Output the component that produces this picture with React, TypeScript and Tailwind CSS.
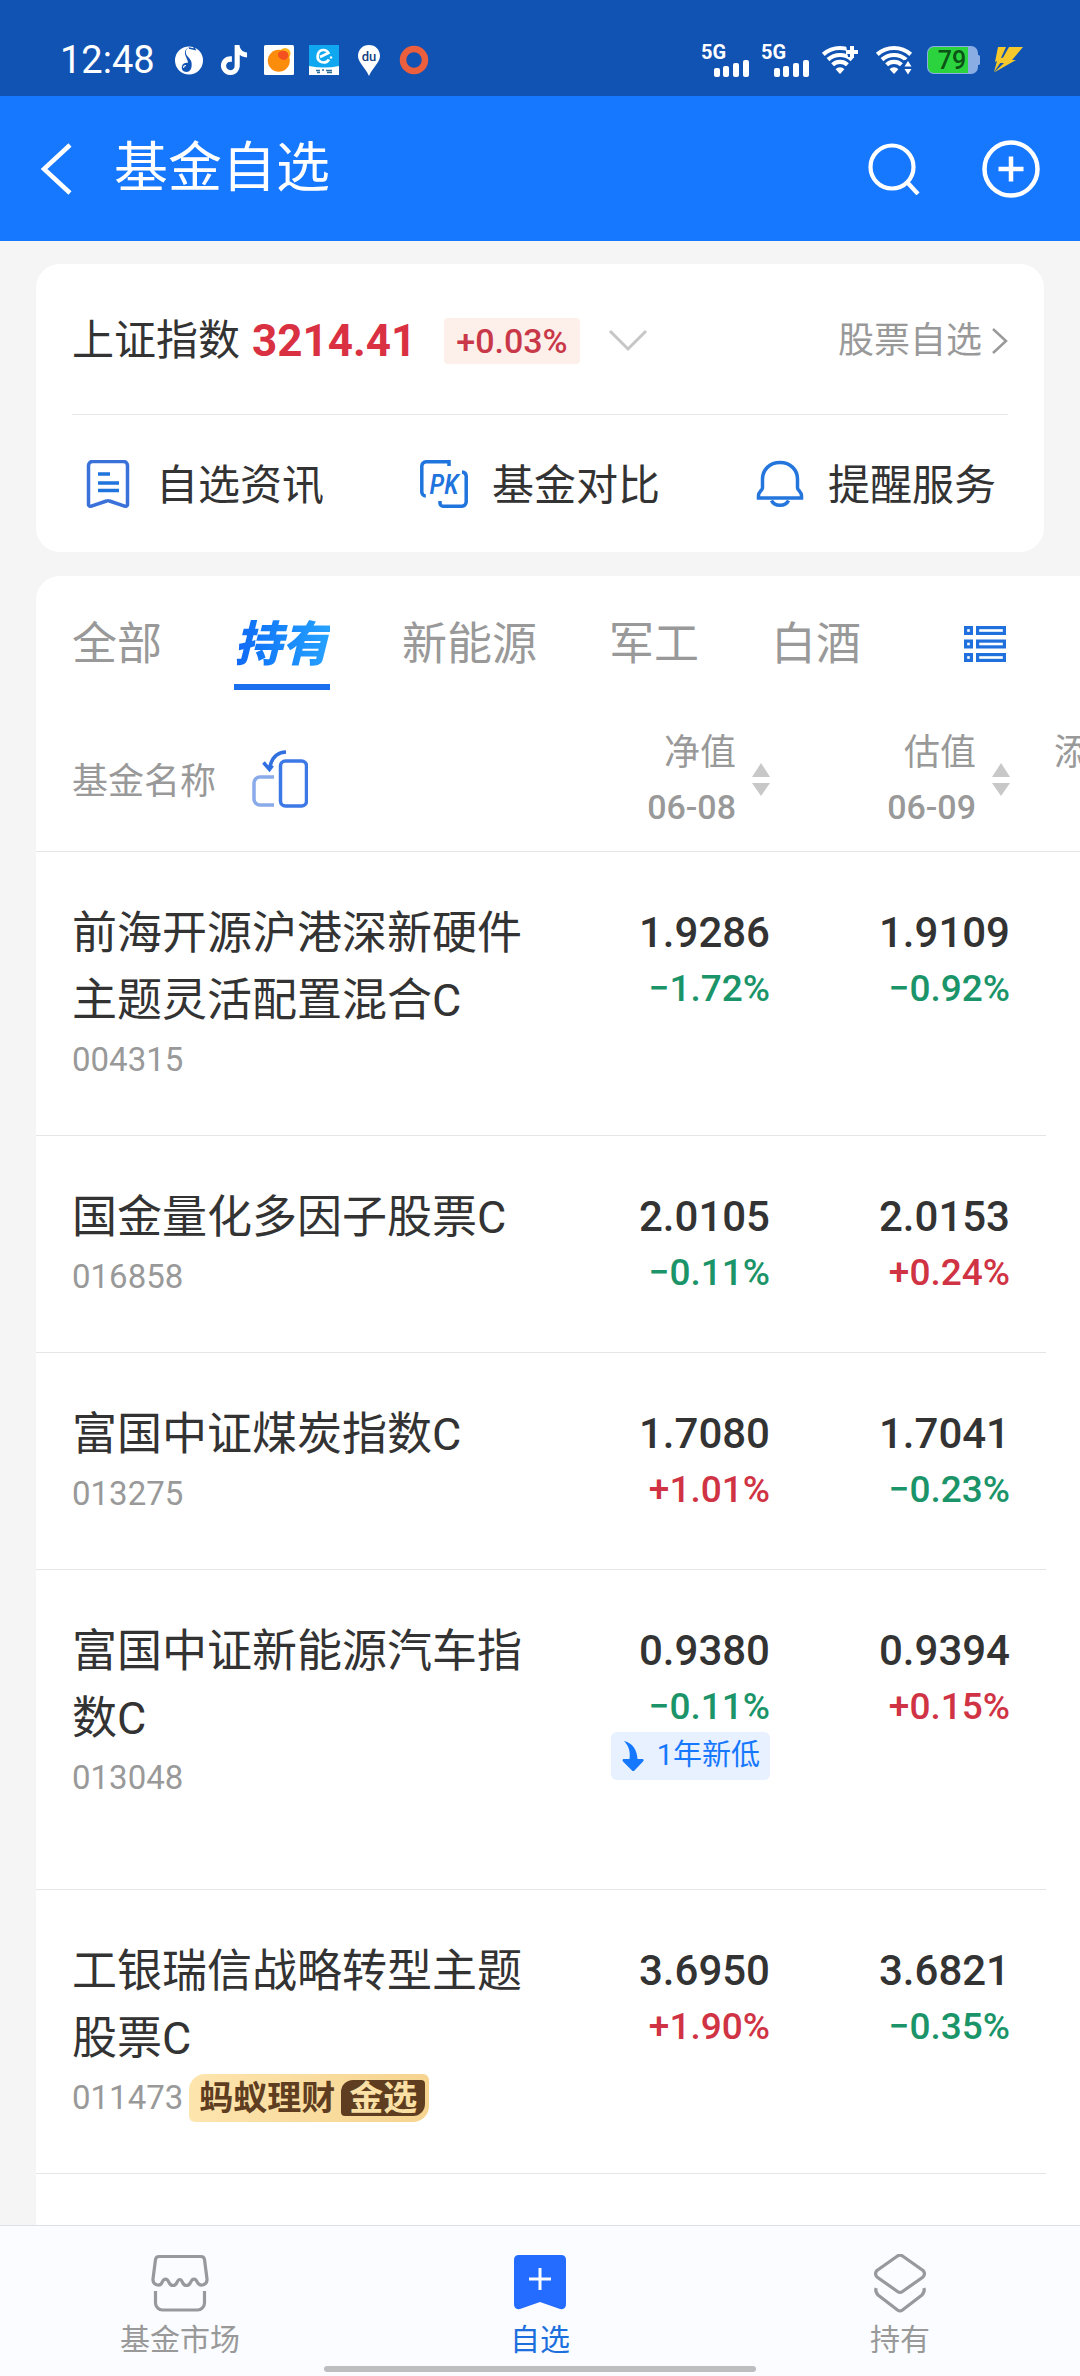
import { useState } from 'react';
import { clsx } from 'clsx';
import { SiTiktok } from 'react-icons/si';

type Quote = { value: string; change: string };

type Fund = {
  name: string;
  code: string;
  nav: Quote;
  estimate: Quote;
  yearLow?: boolean;
  goldPick?: boolean;
};

const FUNDS: Fund[] = [
  {
    name: '前海开源沪港深新硬件主题灵活配置混合C',
    code: '004315',
    nav: { value: '1.9286', change: '−1.72%' },
    estimate: { value: '1.9109', change: '−0.92%' },
  },
  {
    name: '国金量化多因子股票C',
    code: '016858',
    nav: { value: '2.0105', change: '−0.11%' },
    estimate: { value: '2.0153', change: '+0.24%' },
  },
  {
    name: '富国中证煤炭指数C',
    code: '013275',
    nav: { value: '1.7080', change: '+1.01%' },
    estimate: { value: '1.7041', change: '−0.23%' },
  },
  {
    name: '富国中证新能源汽车指数C',
    code: '013048',
    nav: { value: '0.9380', change: '−0.11%' },
    estimate: { value: '0.9394', change: '+0.15%' },
    yearLow: true,
  },
  {
    name: '工银瑞信战略转型主题股票C',
    code: '011473',
    nav: { value: '3.6950', change: '+1.90%' },
    estimate: { value: '3.6821', change: '−0.35%' },
    goldPick: true,
  },
];

const TABS = ['全部', '持有', '新能源', '军工', '白酒'];

function SignalIcon() {
  return (
    <div className="flex w-12 flex-col">
      <span className="text-xl leading-4 font-bold">5G</span>
      <svg width="48" height="17" viewBox="0 0 48 17" fill="#fff">
        <rect x="13" y="8" width="6" height="9" rx="2" />
        <rect x="22" y="6" width="6" height="11" rx="2" />
        <rect x="32" y="3" width="6" height="14" rx="2" />
        <rect x="42" y="0" width="6" height="17" rx="2" />
      </svg>
    </div>
  );
}

function WifiArcs() {
  return (
    <>
      <path
        d="M2.3 9.4A25 25 0 0 1 35.7 9.4M7 14.6A18 18 0 0 1 31 14.6M11.6 19.8A11 11 0 0 1 26.4 19.8"
        fill="none"
        stroke="#fff"
        strokeWidth="4.2"
      />
      <path d="M14.6 24.2A6 6 0 0 1 23.4 24.2L19 29Z" fill="#fff" />
    </>
  );
}

function StatusBar() {
  return (
    <div className="flex h-24 items-center justify-between bg-[#1153b3] pt-6 pr-[57px] pl-15 text-white">
      <div className="flex items-center gap-[15px]">
        <span className="mr-1 text-[38px] leading-12">12:48</span>
        <svg width="30" height="30" viewBox="0 0 30 30">
          <circle cx="15" cy="15.5" r="14" fill="#fff" />
          <path
            d="M22 0C15 1 11 4 12 8.500c.8 3.500 5 5 5.500 9 .8 5-1 9.500-5 9.500-3.500 0-5.500-3-4.500-6 .8-2.500 3-3.500 6-3.200C14 15 11.500 12 11 9 10.500 5 13 1.500 22 0Z"
            fill="#1153b3"
          />
          <path d="m15 3 6 1.500-1-2.500" fill="none" stroke="#1153b3" strokeWidth="1.500" />
          <path d="M12 20.500c-1.500 0-2.500 1-2.500 2.300" fill="none" stroke="#fff" strokeWidth="1.200" />
        </svg>
        <SiTiktok size={30} />
        <svg width="30" height="30" viewBox="0 0 30 30">
          <rect width="30" height="30" rx="1.500" fill="#fff" />
          <circle cx="21" cy="8.500" r="5.500" fill="#f9b21c" />
          <circle cx="14.800" cy="15.800" r="11" fill="#fb8c0c" />
          <path d="M14 9c1-3 7-4.500 9.500-1.500 2.500 3.500-.5 7-3.500 7.500-3.500-.5-6.500-3-6-6Z" fill="#f5501f" />
        </svg>
        <svg width="30" height="30" viewBox="0 0 30 30">
          <rect width="30" height="30" fill="#fff" />
          <path d="M0 0h30v21q-15 3-30 0Z" fill="#0fa8f0" />
          <path
            d="M11 12 19.500 8C17.500 4 11 3.500 9 9 7.500 14.500 10.500 17.500 14.500 17.500c2.500 0 4.500-1.200 5.500-3"
            fill="none"
            stroke="#fff"
            strokeWidth="2.600"
          />
          <circle cx="22" cy="12.500" r="1.200" fill="#fff" />
          <path d="M7 25.500h4M13 25h2M17 25.500h6M8 27.500h3M18 27.500h5" stroke="#2a6f9c" strokeWidth="1.500" />
        </svg>
        <svg width="30" height="31" viewBox="0 0 30 31">
          <path d="M15 0C8.500 0 4 4.800 4 11c0 6.500 7 11 11 20 4-9 11-13.500 11-20C26 4.800 21.500 0 15 0Z" fill="#fff" />
          <text x="15" y="16" textAnchor="middle" fontSize="13" fontWeight="500" fontFamily="Roboto, sans-serif" fill="#12407f">
            du
          </text>
        </svg>
        <svg width="30" height="30" viewBox="0 0 30 30">
          <circle cx="15" cy="15" r="11" fill="none" stroke="#ec5f3c" strokeWidth="6.500" />
        </svg>
      </div>
      <div className="flex items-center gap-3">
        <SignalIcon />
        <SignalIcon />
        <svg width="42" height="30" viewBox="0 0 42 30">
          <WifiArcs />
          <path d="M25 0h17v12H27Z" fill="#1153b3" />
          <path d="M31 1v12M25 7h12" stroke="#fff" strokeWidth="4" />
        </svg>
        <svg width="38" height="30" viewBox="0 0 38 30">
          <WifiArcs />
          <path d="M28.500 15H38v15h-9.500Z" fill="#1153b3" />
          <path d="M29.500 21.500 33 16l3.500 5.500ZM29.500 24 33 29.500l3.500-5.500Z" fill="#fff" />
        </svg>
        <svg width="56" height="28" viewBox="0 0 56 28">
          <rect x="2" width="51" height="28" rx="7" fill="#8aaee3" />
          <rect x="52" y="9" width="3" height="10" rx="1.500" fill="#8aaee3" />
          <path d="M9 1h34v26H9a6 6 0 0 1-6-6V7a6 6 0 0 1 6-6Z" fill="#2bd43f" />
          <text x="27" y="23" textAnchor="middle" fontSize="25" fontWeight="500" fontFamily="Roboto, sans-serif" fill="#0b5216">
            79
          </text>
        </svg>
        <svg width="30" height="26" viewBox="0 0 30 26" fill="#f5c92b">
          <path d="M5 0h8L8 11l3-.5L1 25 4 14 2 15ZM16 0h14L19 13h4L1 25.500 11 16H7Z" />
        </svg>
      </div>
    </div>
  );
}

function TitleBar() {
  return (
    <header className="flex h-[145px] items-center bg-[#1677ff] pr-10 pl-10 text-white">
      <button type="button" aria-label="返回">
        <svg width="32" height="52" viewBox="0 0 32 52" fill="none" stroke="#fff" strokeWidth="4.500">
          <path d="M30 2 4 26l26 24" />
        </svg>
      </button>
      <h1 className="ml-[42px] flex-1 text-[54px] leading-18">基金自选</h1>
      <button type="button" aria-label="搜索" className="mr-[62px]">
        <svg width="52" height="52" viewBox="0 0 52 52" fill="none" stroke="#fff" strokeWidth="4.200">
          <circle cx="24" cy="24" r="21.500" />
          <path d="m39 39 11 12" />
        </svg>
      </button>
      <button type="button" aria-label="添加">
        <svg width="58" height="58" viewBox="0 0 58 58" fill="none" stroke="#fff" strokeWidth="4.500">
          <circle cx="29" cy="29" r="26.500" />
          <path d="M29 16.500v25M16.500 29h25" />
        </svg>
      </button>
    </header>
  );
}

function NewsIcon() {
  return (
    <svg width="48" height="48" viewBox="0 0 48 48" fill="none" stroke="#3a72da" strokeWidth="3.500">
      <path d="M8.500 1.500h31a4 4 0 0 1 4 4v38.500a2 2 0 0 1-3 2L25.500 41q-1.500-.6-3 0L7.500 46a2 2 0 0 1-3-2V5.500a4 4 0 0 1 4-4Z" />
      <path d="M14 14h12M14 23h21M14 30.500h21" stroke="#1f74dd" />
    </svg>
  );
}

function CompareIcon() {
  return (
    <svg width="48" height="48" viewBox="0 0 48 48" fill="none" stroke="#1f74dd" strokeWidth="3.500">
      <path d="M29 6V1.800H6A4.500 4.500 0 0 0 1.800 6v26a4 4 0 0 0 4 4M42 12a4.500 4.500 0 0 1 4.200 4v26a4.500 4.500 0 0 1-4.200 4.200H23a3 3 0 0 1-3-3V41" />
      <text
        x="24"
        y="34"
        textAnchor="middle"
        fontSize="27"
        fontWeight="500"
        fontStyle="italic"
        fontFamily="'Roboto Condensed', Roboto, sans-serif"
        fill="#1f74dd"
        stroke="none"
      >
        PK
      </text>
    </svg>
  );
}

function BellIcon() {
  return (
    <svg width="48" height="48" viewBox="0 0 48 48" fill="none" stroke="#2476dd" strokeWidth="3.500">
      <path d="M24 2.500C13.500 2.500 6.500 10 6.500 19v9c0 2-4 4-4 7.500V38h43v-2.500c0-3.500-4-5.500-4-7.500v-9c0-9-7-16.500-17.500-16.500Z" />
      <path d="M15.500 40.500a9 7 0 0 0 17 0" />
    </svg>
  );
}

const ACTIONS = [
  { label: '自选资讯', Icon: NewsIcon },
  { label: '基金对比', Icon: CompareIcon },
  { label: '提醒服务', Icon: BellIcon },
];

function IndexCard() {
  return (
    <section className="mx-9 mt-[23px] rounded-3xl bg-white">
      <div className="mx-9 flex h-[151px] items-center border-b border-[#e8e8e8] pt-1">
        <span className="text-[42px] leading-15">上证指数</span>
        <span className="ml-3 text-[44px] leading-15 font-bold text-[#d93042]">3214.41</span>
        <span className="ml-7 rounded bg-[#fdefe9] px-3 text-[34px] leading-[46px] font-medium text-[#c93848]">
          +0.03%
        </span>
        <button type="button" aria-label="展开指数" className="ml-7">
          <svg width="40" height="24" viewBox="0 0 40 24" fill="none" stroke="#c6c6c6" strokeWidth="3">
            <path d="m2 2 18 18L38 2" />
          </svg>
        </button>
        <a href="#stocks" className="ml-auto flex items-center gap-2.5 text-4xl text-[#999]">
          股票自选
          <svg width="16" height="26" viewBox="0 0 16 26" fill="none" stroke="#999" strokeWidth="2.500">
            <path d="m1 1 13 12L1 25" />
          </svg>
        </a>
      </div>
      <div className="grid h-[137px] grid-cols-3">
        {ACTIONS.map(({ label, Icon }) => (
          <button key={label} type="button" className="flex items-center justify-center gap-6 text-[42px] leading-15">
            <Icon />
            <span className="pt-1">{label}</span>
          </button>
        ))}
      </div>
    </section>
  );
}

function SortArrows() {
  return (
    <svg width="18" height="34" viewBox="0 0 18 34" fill="#c8c8c8">
      <path d="M9 0l9 14H0ZM0 20h18L9 33Z" />
    </svg>
  );
}

function RotateIcon() {
  return (
    <svg width="56" height="60" viewBox="0 0 56 60" fill="none" strokeWidth="3.500">
      <rect x="28.500" y="11" width="26" height="45" rx="5" stroke="#3c78e6" />
      <path d="M22 27H8a6 6 0 0 0-6 6v16a6 6 0 0 0 6 6h14" stroke="#8aabea" />
      <path d="M34 2C24 2.500 19 8 17.500 19.500M11.500 12.500l6 7 3-4" stroke="#2f6fe0" />
    </svg>
  );
}

function QuoteHeader({ title, date }: { title: string; date: string }) {
  return (
    <th scope="col" className="w-60 border-b border-[#e6e6e6] pt-9 pr-9 pb-[17px] font-normal">
      <button type="button" className="flex w-full items-center justify-end gap-4 text-right">
        <span>
          <span className="block text-4xl leading-[54px]">{title}</span>
          <span className="block text-[34px] leading-[54px] font-medium">{date}</span>
        </span>
        <SortArrows />
      </button>
    </th>
  );
}

function QuoteCell({ quote, yearLow }: { quote: Quote; yearLow?: boolean }) {
  const rising = quote.change.startsWith('+');
  return (
    <td className="border-b border-[#e6e6e6] pt-12 pr-9 text-right align-top font-medium">
      <div className="text-[42px] leading-[66px]">{quote.value}</div>
      <div className={clsx('text-[37px] leading-[46px]', rising ? 'text-[#d03344]' : 'text-[#1a9468]')}>
        {quote.change}
      </div>
      {yearLow && (
        <span className="mt-0.5 inline-flex h-12 items-center gap-3 rounded-md bg-[#e7f1ff] px-2.5 text-[29px] font-normal whitespace-nowrap text-[#1677ff]">
          <svg width="24" height="30" viewBox="0 0 24 30" fill="#1677ff">
            <path d="M3 0c9 2 13 9 13.500 18H22q1.500 1 0 2.500L13 30h-1.500L2 20.500Q.8 19 2.200 18H8.500C9.500 11 8 5 3 0Z" />
          </svg>
          1年新低
        </span>
      )}
    </td>
  );
}

function GoldPickBadge() {
  return (
    <span className="flex h-12 items-center gap-1.5 rounded-tl-2xl rounded-tr-md rounded-br-2xl rounded-bl-md bg-linear-to-r from-[#fde5ae] to-[#f6d490] pr-1 pl-2.5 text-[34px] font-bold text-[#5f3d20]">
      蚂蚁理财
      <span className="rounded-tl-xl rounded-tr-sm rounded-br-xl rounded-bl-sm bg-[#5f3d20] px-2 leading-9 text-[#fbe0a6]">
        金选
      </span>
    </span>
  );
}

function FundTable() {
  return (
    <table className="w-full table-fixed border-separate border-spacing-0">
      <thead className="text-[#999]">
        <tr>
          <th scope="col" className="border-b border-[#e6e6e6] pt-9 pb-[17px] pl-9 font-normal">
            <div className="flex items-center gap-9 text-4xl">
              <span className="pt-1">基金名称</span>
              <button type="button" aria-label="横屏查看">
                <RotateIcon />
              </button>
            </div>
          </th>
          <QuoteHeader title="净值" date="06-08" />
          <QuoteHeader title="估值" date="06-09" />
          <th
            scope="col"
            className="w-[34px] border-b border-[#e6e6e6] pt-9 pl-2 text-left align-top text-4xl leading-[54px] font-normal whitespace-nowrap"
          >
            添
          </th>
        </tr>
      </thead>
      <tbody>
        {FUNDS.map((fund) => (
          <tr key={fund.code}>
            <td
              className={clsx(
                'border-b border-[#e6e6e6] pt-12 pr-8 pl-9 align-top',
                fund.yearLow ? 'pb-[85px]' : 'pb-[49px]',
              )}
            >
              <div className="text-[45px] leading-[67px]">{fund.name}</div>
              <div className="flex h-13 items-center gap-1.5 text-[33px] text-[#999]">
                {fund.code}
                {fund.goldPick && <GoldPickBadge />}
              </div>
            </td>
            <QuoteCell quote={fund.nav} yearLow={fund.yearLow} />
            <QuoteCell quote={fund.estimate} />
            <td />
          </tr>
        ))}
      </tbody>
    </table>
  );
}

function FundPanel() {
  const [active, setActive] = useState('持有');

  return (
    <section className="mt-6 ml-9 flex-1 overflow-hidden rounded-tl-3xl bg-white">
      <div className="flex h-[114px] items-end pr-[74px] pl-9">
        <div className="flex gap-18">
          {TABS.map((tab) => (
            <button
              key={tab}
              type="button"
              onClick={() => setActive(tab)}
              className={clsx(
                'border-b-6 pb-1.5 whitespace-nowrap',
                tab === active
                  ? 'border-[#1a6fee] text-5xl leading-[66px]'
                  : 'border-transparent text-[45px] leading-[66px] text-[#999]',
              )}
            >
              <span
                className={clsx(
                  tab === active &&
                    'bg-linear-to-r from-[#1268f5] to-[#27a2ff] bg-clip-text font-black text-transparent italic',
                )}
              >
                {tab}
              </span>
            </button>
          ))}
        </div>
        <button type="button" aria-label="分组列表" className="mb-7 ml-auto">
          <svg width="42" height="36" viewBox="0 0 42 36" fill="none" stroke="#1f6fdc" strokeWidth="3.200">
            <rect x="1.600" y="1.600" width="5.800" height="5.800" />
            <rect x="13.600" y="1.600" width="26.800" height="5.800" />
            <rect x="1.600" y="15.100" width="5.800" height="5.800" />
            <rect x="13.600" y="15.100" width="26.800" height="5.800" />
            <rect x="1.600" y="28.600" width="5.800" height="5.800" />
            <rect x="13.600" y="28.600" width="26.800" height="5.800" />
          </svg>
        </button>
      </div>
      <FundTable />
    </section>
  );
}

function BottomNav() {
  return (
    <nav className="relative grid h-[151px] grid-cols-3 border-t border-[#dcdfe3] bg-[#fafcff] pt-7 text-center text-[30px] leading-11 text-[#999]">
      <a href="#market" className="flex flex-col items-center gap-1">
        <svg width="58" height="60" viewBox="0 0 58 60" fill="none" stroke="#97999c" strokeWidth="3.200">
          <path d="M8 2.500h42q3 0 3.500 3L56 25c.5 6-7 8-9.500 3.500-2-4.500-5-4.500-7 0-2 4-6 4-8 0-1.500-4-4-4-5.500 0-2 4-6 4-8 0-2-4.500-5-4.500-7 0C9 33 1.500 31 2 25L4.500 5.500q.5-3 3.500-3Z" />
          <path d="M4.500 37v12a7 7 0 0 0 7 7h35a7 7 0 0 0 7-7V37" />
        </svg>
        基金市场
      </a>
      <a href="#watchlist" className="flex flex-col items-center gap-1 text-[#1c6fdc]">
        <svg width="54" height="60" viewBox="0 0 54 60">
          <path d="M6 1h42q5 0 5 5v44q0 6-6 5L27 48 7 55q-6 1-6-5V6q0-5 5-5Z" fill="#246bff" />
          <path d="M27 14v22M16 25h22" stroke="#fff" strokeWidth="3" />
        </svg>
        自选
      </a>
      <a href="#holdings" className="flex flex-col items-center gap-1">
        <svg width="54" height="60" viewBox="0 0 54 60" fill="none" stroke="#97999c" strokeWidth="3.200">
          <path d="M24.500 2q2.500-1.800 5 0L50 16.500q3 3 0 6.500L29.500 37.500q-2.500 1.800-5 0L4 23q-3-3.500 0-6.500Z" />
          <path d="M3 34q-1 4 2 7l19.500 15q2.500 1.800 5 0L49 41q3-3 2-7" />
        </svg>
        持有
      </a>
      <div className="absolute bottom-1 left-1/2 h-1.5 w-2/5 -translate-x-1/2 rounded-full bg-[#bdbec0]" />
    </nav>
  );
}

export default function App() {
  return (
    <div className="flex min-h-screen flex-col bg-[#f5f5f5] font-[family-name:Roboto,'Noto_Sans_CJK_SC',sans-serif] text-[#333]">
      <StatusBar />
      <TitleBar />
      <main className="flex flex-1 flex-col">
        <IndexCard />
        <FundPanel />
      </main>
      <BottomNav />
    </div>
  );
}
